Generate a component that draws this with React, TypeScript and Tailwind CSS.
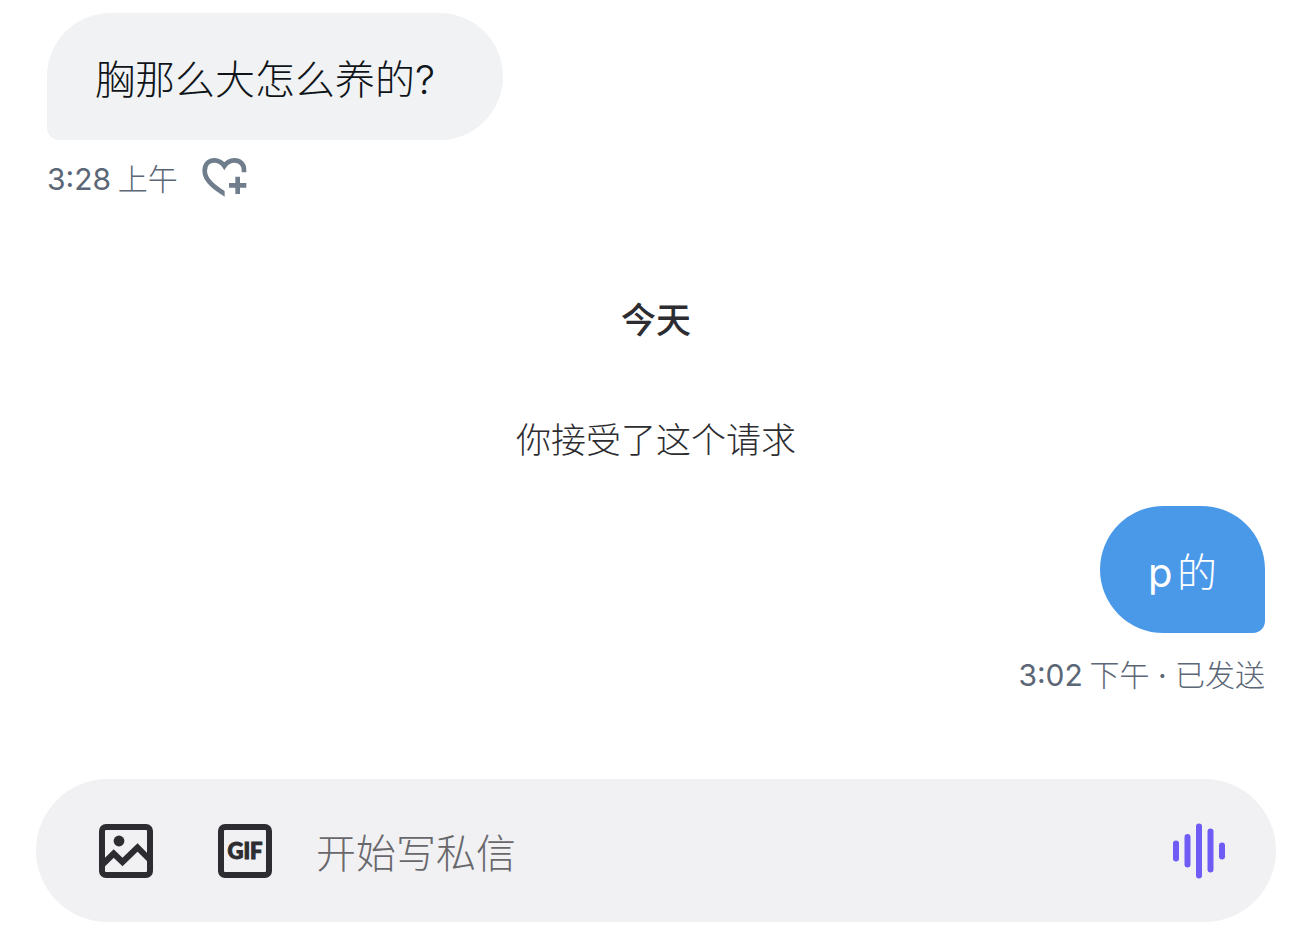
import type { ReactNode } from "react";

function HeartPlusIcon() {
  return (
    <svg viewBox="36 36 135 120" className="h-10 w-[45px]" fill="none" stroke="currentColor" aria-hidden="true">
      <defs>
        <clipPath id="heart-cut">
          <path d="M30 30H175V82H104V160H30Z" />
        </clipPath>
      </defs>
      <path
        clipPath="url(#heart-cut)"
        strokeWidth="14"
        d="M116 154C80 132 44 108 44 78C44 58 56 46 73 46C88 46 97 54 103 63C109 54 118 46 133 46C150 46 162 58 162 74V86"
      />
      <path strokeWidth="14" d="M117 121H169M143 95V147" />
    </svg>
  );
}

function ImageIcon() {
  return (
    <svg viewBox="0 0 54 54" className="size-[54px]" aria-hidden="true">
      <rect x="3" y="3" width="48" height="48" rx="4" fill="none" stroke="currentColor" strokeWidth="6" />
      <circle cx="20" cy="17" r="5.4" fill="currentColor" />
      <path d="M4 40L14.700 29.500L23.500 38L38.500 23.500L50 35" fill="none" stroke="currentColor" strokeWidth="6" />
    </svg>
  );
}

function GifIcon() {
  return (
    <svg viewBox="0 0 54 54" className="size-[54px]" aria-hidden="true">
      <rect x="3" y="3" width="48" height="48" rx="4" fill="none" stroke="currentColor" strokeWidth="6" />
      <text
        x="27"
        y="35"
        textAnchor="middle"
        fill="currentColor"
        stroke="currentColor"
        strokeWidth="1"
        className="font-['Lato'] text-[22px] font-black"
      >
        GIF
      </text>
    </svg>
  );
}

function VoiceIcon() {
  return (
    <svg
      viewBox="0 0 54 56"
      className="h-14 w-[54px]"
      fill="none"
      stroke="currentColor"
      strokeWidth="6"
      strokeLinecap="round"
      aria-hidden="true"
    >
      <path d="M4 20.500V35.500M15.500 14V41.500M27 3.500V52.500M38.500 8.500V46.500M50 22.500V33.500" />
    </svg>
  );
}

function Latin({ children }: { children: ReactNode }) {
  return <span className="font-['Inter',sans-serif] leading-none font-normal">{children}</span>;
}

function Meta({ children }: { children: ReactNode }) {
  return <p className="text-[30px] leading-10 font-light text-[#5b6676]">{children}</p>;
}

export default function App() {
  return (
    <main className="flex min-h-screen flex-col bg-white pt-[13px] pb-6 font-['Noto_Sans_CJK_SC',sans-serif] text-[#2d2d31]">
      <section className="flex flex-1 flex-col pr-[46px] pl-[47px]">
        <div className="self-start rounded-[64px] rounded-bl-xl bg-[#f0f2f4] pt-[33px] pr-[68px] pb-[31px] pl-12 text-[40px] leading-[63px] font-light text-[#0f1419]">
          胸那么大怎么养的<span className="font-['Inter',sans-serif] leading-none">?</span>
        </div>
        <div className="mt-[17px] flex items-center gap-6">
          <Meta>
            <Latin>3:28</Latin> 上午
          </Meta>
          <button type="button" aria-label="添加回应" className="text-[#6f7d8c]">
            <HeartPlusIcon />
          </button>
        </div>
        <h2 className="mt-[95px] text-center text-[35px] leading-[52px] font-medium">今天</h2>
        <p className="mt-[68px] text-center text-[35px] leading-[52px] font-light">你接受了这个请求</p>
        <div className="mt-[42px] self-end rounded-[64px] rounded-br-xl bg-[#4a99e9] px-12 pt-[33px] pb-[31px] text-[40px] leading-[63px] font-light text-white">
          <Latin>p</Latin>
          <span className="text-xl leading-none"> </span>的
        </div>
        <div className="mt-5 self-end">
          <Meta>
            <Latin>3:02</Latin> 下午<Latin> · </Latin>已发送
          </Meta>
        </div>
      </section>
      <form
        className="mr-[35px] ml-9 flex h-[143px] items-center rounded-full bg-[#f1f1f4] pr-[50px] pl-[63px]"
        onSubmit={(event) => event.preventDefault()}
      >
        <button type="button" aria-label="图片" className="mr-[65px] shrink-0">
          <ImageIcon />
        </button>
        <button type="button" aria-label="GIF" className="mr-11 shrink-0">
          <GifIcon />
        </button>
        <input
          type="text"
          aria-label="开始写私信"
          placeholder="开始写私信"
          className="h-16 min-w-0 flex-1 bg-transparent text-[40px] font-light outline-none placeholder:text-[#68686c]"
        />
        <button type="button" aria-label="语音消息" className="shrink-0 text-[#6f5cf5]">
          <VoiceIcon />
        </button>
      </form>
    </main>
  );
}
